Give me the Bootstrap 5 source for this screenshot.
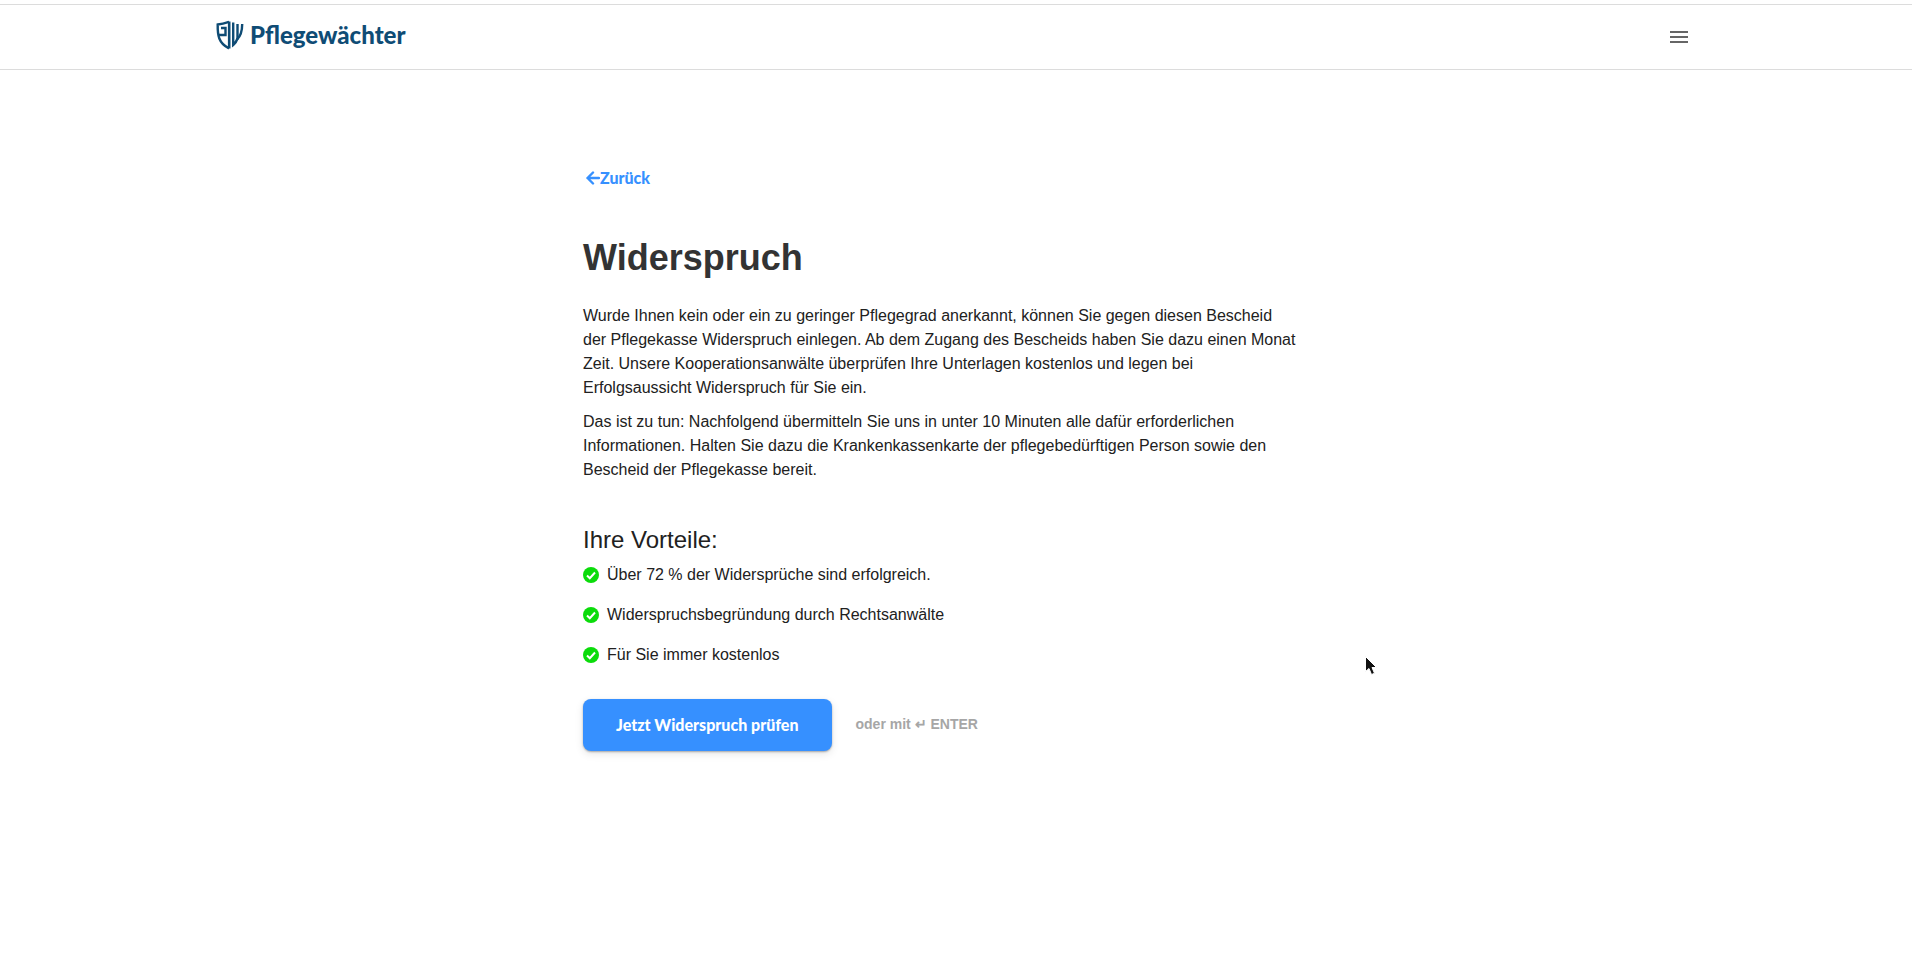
<!DOCTYPE html>
<html lang="de">
<head>
<meta charset="utf-8">
<meta name="viewport" content="width=device-width, initial-scale=1">
<title>Pflegewächter – Widerspruch</title>
<link href="https://cdn.jsdelivr.net/npm/bootstrap@5.3.0/dist/css/bootstrap.min.css" rel="stylesheet">
<style>
  body { font-family: "Liberation Sans", Arial, sans-serif; font-size: 16px; line-height: 24px; color: #212121; background: #fff; }
  .site-header { margin-top: 4px; border-top: 1px solid #dcdcdc; border-bottom: 1px solid #dcdcdc; height: 66px; }
  .header-inner { max-width: 1480px; padding-right: 5px; }
  .brand { color: #0f4c75; font: 900 24px/32px Lato, sans-serif; gap: 6px; padding-bottom: 4px; }
  .menu-btn { color: #666; line-height: 0; }
  .page { max-width: 786px; padding: 96px 20px 40px; }
  .back-link { color: #3690ff; font: 900 16px/24px Lato, sans-serif; padding-left: 2px; }
  .page-title { font-size: 36px; line-height: 44px; font-weight: 700; color: #333; margin: 44px 0 24px; }
  .intro { margin-bottom: 10px; }
  .benefits-title { font-size: 24px; line-height: 32px; font-weight: 400; margin: 42px 0 7px; }
  .benefits { gap: 16px; }
  .start-btn { background: #3690ff; color: #fff; font: 900 16px/24px Lato, sans-serif; padding: 14px 33px; border: 0; border-radius: 8px; box-shadow: 0 1px 2px rgba(0,0,0,.3), 0 3px 8px rgba(0,0,0,.1); }
  .start-btn:hover { background: #2680ef; color: #fff; }
  .hint { font-size: 14px; font-weight: 700; color: #a6a6a6; padding-bottom: 2px; }
  .pointer { position: absolute; left: 1364px; top: 655px; pointer-events: none; }
</style>
</head>
<body>
<header class="site-header">
  <div class="header-inner container-fluid h-100 ps-0 d-flex align-items-center justify-content-between">
    <a href="#" class="brand d-flex align-items-center text-decoration-none">
      <svg width="28" height="30" viewBox="0 0 28 30" fill="none" stroke="currentColor" stroke-width="2.400" aria-hidden="true">
        <path d="M13 1.800C9 3.200 5 4.200 1.700 4.500C1.500 15 2.500 23.500 13 28.300"/>
        <path d="M2 15H9.500V8H5"/>
        <path d="M13.200 1.500V28.500" stroke-width="2.600"/>
        <path d="M17.200 2.500V25C19 23.500 20.500 21.500 21.500 18.500V4"/>
        <path d="M21 19.500C24.800 16 26.200 11 26.200 4"/>
      </svg>
      <span>Pflegewächter</span>
    </a>
    <button type="button" class="menu-btn btn p-0 border-0" aria-label="Menü">
      <svg width="24" height="24" viewBox="0 0 24 24" fill="currentColor" aria-hidden="true"><path d="M3 18h18v-2H3v2zm0-5h18v-2H3v2zm0-7v2h18V6H3z"/></svg>
    </button>
  </div>
</header>

<main class="page container-fluid">
  <a href="#" class="back-link d-inline-flex align-items-center text-decoration-none">
    <svg width="15" height="14" viewBox="0 0 15 14" fill="none" stroke="currentColor" stroke-width="2.400" stroke-linecap="round" stroke-linejoin="round" aria-hidden="true"><path d="M8 1.500L2.500 7l5.500 5.500M2.500 7h11.500"/></svg>
    <span>Zurück</span>
  </a>
  <h1 class="page-title">Widerspruch</h1>
  <p class="intro">Wurde Ihnen kein oder ein zu geringer Pflegegrad anerkannt, können Sie gegen diesen Bescheid<br>der Pflegekasse Widerspruch einlegen. Ab dem Zugang des Bescheids haben Sie dazu einen Monat<br>Zeit. Unsere Kooperationsanwälte überprüfen Ihre Unterlagen kostenlos und legen bei<br>Erfolgsaussicht Widerspruch für Sie ein.</p>
  <p class="intro">Das ist zu tun: Nachfolgend übermitteln Sie uns in unter 10 Minuten alle dafür erforderlichen<br>Informationen. Halten Sie dazu die Krankenkassenkarte der pflegebedürftigen Person sowie den<br>Bescheid der Pflegekasse bereit.</p>

  <h2 class="benefits-title">Ihre Vorteile:</h2>
  <svg width="0" height="0" class="d-none" aria-hidden="true">
    <symbol id="check" viewBox="0 0 16 16"><circle cx="8" cy="8" r="8" fill="#0bdc0b"/><path d="M4 8.500l2.800 2.700L12 5.500" fill="none" stroke="#fff" stroke-width="2"/></symbol>
  </svg>
  <ul class="benefits list-unstyled d-flex flex-column mb-0">
    <li class="d-flex align-items-center gap-2"><svg width="16" height="16" aria-hidden="true"><use href="#check"/></svg>Über 72 % der Widersprüche sind erfolgreich.</li>
    <li class="d-flex align-items-center gap-2"><svg width="16" height="16" aria-hidden="true"><use href="#check"/></svg>Widerspruchsbegründung durch Rechtsanwälte</li>
    <li class="d-flex align-items-center gap-2"><svg width="16" height="16" aria-hidden="true"><use href="#check"/></svg>Für Sie immer kostenlos</li>
  </ul>
  <div class="d-flex flex-wrap align-items-center gap-4 mt-4 pt-2">
    <button type="button" class="start-btn btn">Jetzt Widerspruch prüfen</button>
    <span class="hint">oder mit ↵ ENTER</span>
  </div>
</main>
<svg class="pointer" width="14" height="22" viewBox="0 0 14 22" aria-hidden="true"><path d="M1.500 1.500V16.500L5 13.500L7.500 19.500L10.500 18.300L8 12.500H12.500Z" fill="#111" stroke="#fff" stroke-width="1"/></svg>
<script src="https://cdn.jsdelivr.net/npm/bootstrap@5.3.0/dist/js/bootstrap.bundle.min.js"></script>
</body>
</html>
